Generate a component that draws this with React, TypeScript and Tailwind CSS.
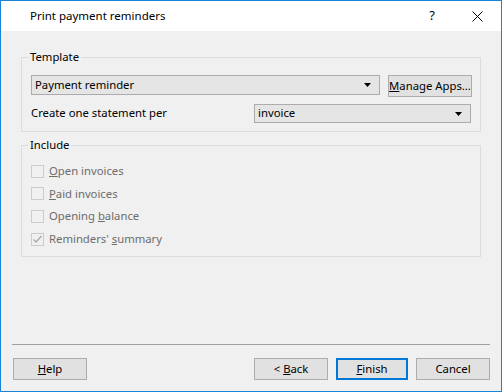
import React from "react";

const font = { fontFamily: '"Noto Sans", "Segoe UI", sans-serif' };

function Arrow() {
  return (
    <svg width="7" height="4" viewBox="0 0 7 4" className="shrink-0">
      <path d="M0 0 H7 L3.5 4 Z" fill="#000" />
    </svg>
  );
}

function Combo({ value, className }: { value: string; className: string }) {
  return (
    <div
      className={
        "flex items-center justify-between pl-[3px] pr-[8px] bg-[#e5e5e5] border border-[#acacac] text-[11.3px] text-black " +
        className
      }
    >
      <span>{value}</span>
      <Arrow />
    </div>
  );
}

function Btn({
  children,
  primary,
  className = "",
}: {
  children: React.ReactNode;
  primary?: boolean;
  className?: string;
}) {
  return (
    <div
      className={
        "flex items-center justify-center h-[22px] bg-[#e1e1e1] text-[11.3px] text-black whitespace-nowrap " +
        (primary ? "border-2 border-[#0078d7] " : "border border-[#adadad] ") +
        className
      }
    >
      {children}
    </div>
  );
}

function Check({ label, checked }: { label: React.ReactNode; checked?: boolean }) {
  return (
    <div className="flex items-center gap-[5px] h-[22.67px] text-[11.3px] text-[#6d6d6d]">
      <div className="w-[13px] h-[13px] border border-[#cccccc] bg-[#f0f0f0] flex items-center justify-center">
        {checked && (
          <svg width="11" height="11" viewBox="0 0 11 11">
            <path d="M1.5 5.5 L4 8 L9.5 2" stroke="#a8a8a8" strokeWidth="1.3" fill="none" />
          </svg>
        )}
      </div>
      <span>{label}</span>
    </div>
  );
}

export default function App() {
  return (
    <div className="w-[502px] h-[392px] border border-[#1883d7] flex flex-col bg-[#f0f0f0]" style={font}>
      {/* TITLE BAR */}
      <div className="h-[30px] bg-white flex items-center shrink-0">
        <span className="ml-[29px] text-[11.5px] text-black">Print payment reminders</span>
        <span className="ml-auto mr-[37px] text-[13px] text-black">?</span>
        <svg width="11" height="11" viewBox="0 0 11 11" className="mr-[18px]">
          <path d="M0.5 0.5 L10.5 10.5 M10.5 0.5 L0.5 10.5" stroke="#000" strokeWidth="1" />
        </svg>
      </div>

      {/* BODY */}
      <div className="flex-1 flex flex-col px-[20px] pt-[26px]">
        {/* TEMPLATE GROUP */}
        <div className="border border-[#dcdcdc] h-[75px] flex flex-col">
          <span className="-mt-[9px] ml-[6px] px-[2px] w-fit bg-[#f0f0f0] text-[11.3px] leading-[16px] text-black">
            Template
          </span>
          <div className="flex items-start mt-[10px] ml-[9px]">
            <Combo value="Payment reminder" className="w-[349px] h-[20px]" />
            <Btn className="ml-[8px] w-[84px] h-[21px] px-[4px]">
              <span>
                <span className="underline">M</span>anage Apps...
              </span>
            </Btn>
          </div>
          <div className="flex items-center mt-[7px] ml-[9px] h-[19px]">
            <span className="text-[11.3px] text-black w-[223px]">Create one statement per</span>
            <Combo value="invoice" className="w-[217px] h-[19px]" />
          </div>
        </div>

        {/* INCLUDE GROUP */}
        <div className="border border-[#dcdcdc] h-[112px] flex flex-col mt-[13px]">
          <span className="-mt-[9px] ml-[6px] px-[2px] w-fit bg-[#f0f0f0] text-[11.3px] leading-[16px] text-black">
            Include
          </span>
          <div className="flex flex-col ml-[9px] mt-[7px]">
            <Check label={<><span className="underline">O</span>pen invoices</>} />
            <Check label={<><span className="underline">P</span>aid invoices</>} />
            <Check label={<>Opening <span className="underline">b</span>alance</>} />
            <Check checked label={<>Reminders' <span className="underline">s</span>ummary</>} />
          </div>
        </div>

        <div className="flex-1" />
      </div>

      {/* FOOTER */}
      <div className="shrink-0 px-[11px]">
        <div className="h-[1px] bg-[#a0a0a0]" />
        <div className="flex items-center pt-[13px] pb-[11px]">
          <Btn className="w-[74px] ml-[1px]">
            <span>
              <span className="underline">H</span>elp
            </span>
          </Btn>
          <div className="flex-1" />
          <Btn className="w-[74px]">
            <span>
              &lt; <span className="underline">B</span>ack
            </span>
          </Btn>
          <Btn primary className="w-[72px] ml-[8px]">
            <span>
              <span className="underline">F</span>inish
            </span>
          </Btn>
          <Btn className="w-[74px] ml-[8px]">Cancel</Btn>
        </div>
      </div>
    </div>
  );
}
